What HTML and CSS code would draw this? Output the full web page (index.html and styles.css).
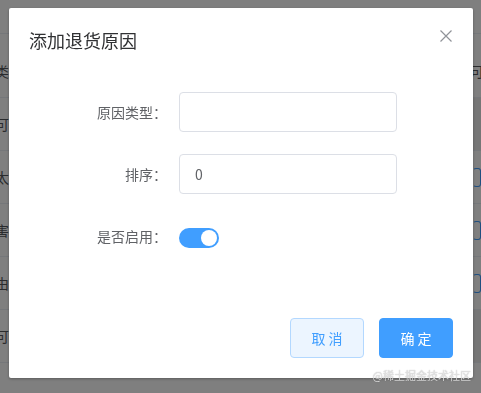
FILE: index.html
```html
<!DOCTYPE html>
<html lang="zh-CN">
<head>
<meta charset="utf-8">
<title>添加退货原因</title>
<link rel="stylesheet" href="styles.css">
</head>
<body>
<div class="page">
  <div class="top-space"></div>
  <div class="row row-head"><span class="cell-left">类</span><span class="cell-right"><span class="peek-text">可</span></span></div>
  <div class="row row-shade"><span class="cell-left">可</span><span class="cell-right"></span></div>
  <div class="row"><span class="cell-left">太</span><span class="cell-right"><span class="peek-btn"></span></span></div>
  <div class="row"><span class="cell-left">害</span><span class="cell-right"><span class="peek-btn"></span></span></div>
  <div class="row"><span class="cell-left">由</span><span class="cell-right"><span class="peek-btn"></span></span></div>
  <div class="row row-shade2"><span class="cell-left">可</span><span class="cell-right"></span></div>
  <div class="row row-last"><span class="cell-left"></span><span class="cell-right"></span></div>
</div>

<div class="overlay">
  <div class="dialog">
    <div class="dialog-header">
      <span class="dialog-title">添加退货原因</span>
      <button class="dialog-close" aria-label="关闭">
        <svg width="12" height="12" viewBox="0 0 12 12"><path d="M0.5 0.5 L11.5 11.5 M11.5 0.5 L0.5 11.5" stroke="#909399" stroke-width="1.2" fill="none"/></svg>
      </button>
    </div>
    <div class="dialog-body">
      <div class="form-item">
        <label class="form-label">原因类型：</label>
        <div class="form-content"><input class="input" type="text" value=""></div>
      </div>
      <div class="form-item">
        <label class="form-label">排序：</label>
        <div class="form-content"><input class="input" type="text" value="0"></div>
      </div>
      <div class="form-item">
        <label class="form-label">是否启用：</label>
        <div class="form-content"><span class="switch"><span class="switch-knob"></span></span></div>
      </div>
    </div>
    <div class="dialog-footer">
      <button class="btn btn-plain">取 消</button>
      <button class="btn btn-primary">确 定</button>
    </div>
  </div>
  <div class="watermark">@稀土掘金技术社区</div>
</div>
</body>
</html>
```

FILE: styles.css
```css
* { box-sizing: border-box; }

html, body {
  margin: 0;
  padding: 0;
  width: 481px;
  height: 393px;
  overflow: hidden;
  background: #fff;
  font-family: "Noto Sans CJK SC", "Liberation Sans", sans-serif;
}

/* background page */
.page {
  display: flex;
  flex-direction: column;
  width: 481px;
  height: 393px;
  overflow: hidden;
}
.top-space { height: 33px; flex: none; }
.row {
  flex: none;
  height: 53px;
  display: flex;
  justify-content: space-between;
  align-items: center;
  border-top: 1px solid #ebeef5;
}
.row-head { height: 64px; padding-top: 10px; }
.row-last { height: 30px; }
.cell-left {
  margin-left: -5px;
  font-size: 14px;
  color: #55575b;
}
.cell-right {
  width: 8px;
  height: 100%;
  display: flex;
  align-items: center;
}
.row-shade .cell-right { background: #ececec; }
.row-shade2 .cell-right { background: #ececec; }
.peek-text {
  font-size: 14px;
  color: #55575b;
  margin-left: -3px;
}
.peek-btn {
  width: 20px;
  height: 19px;
  margin-left: 0;
  border: 1px solid #409eff;
  border-left-color: transparent;
  border-radius: 3px;
}

/* overlay */
.overlay {
  position: fixed;
  inset: 0;
  background: rgba(0, 0, 0, 0.5);
  padding: 8px 0 0 9px;
}
.dialog {
  position: relative;
  width: 464px;
  height: 370px;
  background: #fff;
  border-radius: 2px;
  box-shadow: 0 1px 3px rgba(0, 0, 0, 0.3);
  display: flex;
  flex-direction: column;
}
.dialog-header {
  padding: 20px 20px 10px;
}
.dialog-title {
  display: block;
  font-size: 18px;
  line-height: 24px;
  color: #303133;
}
.dialog-close {
  position: absolute;
  top: 22px;
  right: 21px;
  width: 12px;
  height: 12px;
  padding: 0;
  border: 0;
  background: none;
  display: flex;
}
.dialog-body {
  padding: 30px 20px 0;
  flex: 1;
}
.form-item {
  display: flex;
  align-items: center;
  height: 40px;
  margin-bottom: 22px;
}
.form-label {
  width: 150px;
  padding-right: 12px;
  text-align: right;
  font-size: 14px;
  color: #606266;
}
.form-content {
  display: flex;
  align-items: center;
}
.input {
  width: 218px;
  height: 40px;
  border: 1px solid #dcdfe6;
  border-radius: 4px;
  padding: 0 15px;
  font-family: inherit;
  font-size: 14px;
  color: #606266;
  outline: none;
}
.switch {
  width: 40px;
  height: 20px;
  border-radius: 10px;
  background: #409eff;
  display: flex;
  align-items: center;
  justify-content: flex-end;
  padding: 0 2px;
  margin-top: 4px;
}
.switch-knob {
  width: 16px;
  height: 16px;
  border-radius: 50%;
  background: #fff;
}

.dialog-footer {
  padding: 10px 20px 20px;
  display: flex;
  justify-content: flex-end;
  gap: 15px;
}
.btn {
  height: 40px;
  width: 74px;
  border-radius: 4px;
  font-family: inherit;
  font-size: 14px;
  padding: 0;
}
.btn-plain {
  background: #ecf5ff;
  border: 1px solid #b3d8ff;
  color: #409eff;
}
.btn-primary {
  background: #409eff;
  border: 1px solid #409eff;
  color: #fff;
}

.watermark {
  position: absolute;
  right: 10px;
  top: 368px;
  font-size: 11px;
  line-height: 14px;
  color: rgba(235, 235, 235, 0.85);
  text-shadow: 0 0 1px rgba(0, 0, 0, 0.35);
}
```
